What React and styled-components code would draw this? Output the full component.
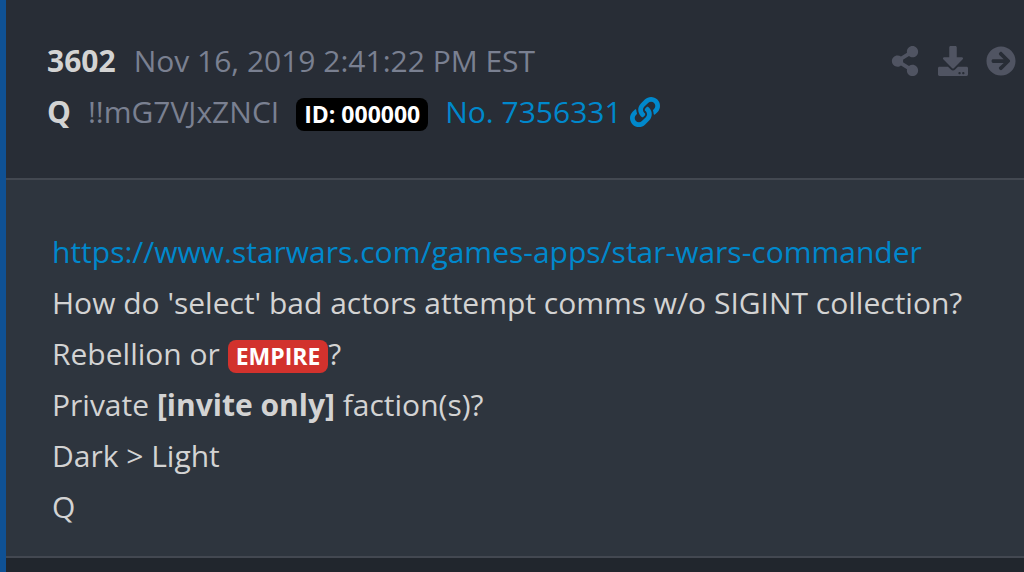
import React from 'react';
import styled, { createGlobalStyle } from 'styled-components';
import { FaArrowCircleRight, FaDownload, FaLink, FaShareAlt } from 'react-icons/fa';

const colors = {
  page: '#21262d',
  header: '#282d36',
  body: '#2e353e',
  border: '#434851',
  accent: '#0f5194',
  text: '#d3d3d3',
  muted: '#7a8091',
  icon: '#505462',
  link: '#0088cc',
  danger: '#d2322d',
};

const GlobalStyle = createGlobalStyle`
  * {
    box-sizing: border-box;
  }
  body {
    margin: 0;
    background: ${colors.page};
    color: ${colors.text};
    font-family: 'Open Sans', sans-serif;
    font-size: 30px;
    line-height: 51px;
  }
`;

const StyledPost = styled.article`
  min-height: 100vh;
  border-left: 6px solid ${colors.accent};
`;

const StyledHeader = styled.header`
  display: flex;
  justify-content: space-between;
  align-items: flex-start;
  padding: 35px 8px 41px 41px;
  background: ${colors.header};
  border-bottom: 2px solid ${colors.border};
`;

const StyledMetaRow = styled.div`
  display: flex;
  align-items: baseline;
  gap: ${({ $gap }) => $gap}px;
`;

const StyledMuted = styled.span`
  color: ${colors.muted};
`;

const StyledLabel = styled.span`
  display: inline-block;
  padding: 0 8px;
  border-radius: 8px;
  background: ${({ $bg }) => $bg};
  color: #fff;
  font-size: 23px;
  font-weight: 700;
  line-height: 33px;
`;

const StyledLink = styled.a`
  color: ${colors.link};
  text-decoration: none;
`;

const StyledPostLink = styled(StyledLink)`
  display: flex;
  align-items: center;
  gap: 8px;
`;

const StyledActions = styled.nav`
  display: flex;
  align-items: center;
  gap: 18px;
  height: 51px;
`;

const StyledAction = styled.button`
  display: flex;
  padding: 0;
  border: 0;
  background: none;
  color: ${colors.icon};
  font-size: 30px;
  cursor: pointer;
`;

const StyledBody = styled.div`
  padding: 46px 46px 24px;
  background: ${colors.body};
  border-bottom: 2px solid ${colors.border};
`;

const StyledLine = styled.p`
  margin: 0;
`;

const actions = [
  { name: 'Share', Icon: FaShareAlt },
  { name: 'Download', Icon: FaDownload },
  { name: 'Go to post', Icon: FaArrowCircleRight },
];

const App = () => (
  <>
    <GlobalStyle />
    <StyledPost>
      <StyledHeader>
        <div>
          <StyledMetaRow $gap={18}>
            <strong>3602</strong>
            <StyledMuted as="time" dateTime="2019-11-16T14:41:22-05:00">
              Nov 16, 2019 2:41:22 PM EST
            </StyledMuted>
          </StyledMetaRow>
          <StyledMetaRow $gap={17}>
            <strong>Q</strong>
            <StyledMuted>!!mG7VJxZNCI</StyledMuted>
            <StyledLabel $bg="#000">ID: 000000</StyledLabel>
            <StyledPostLink href="#7356331">
              No. 7356331
              <FaLink />
            </StyledPostLink>
          </StyledMetaRow>
        </div>
        <StyledActions>
          {actions.map(({ name, Icon }) => (
            <StyledAction key={name} type="button" aria-label={name}>
              <Icon />
            </StyledAction>
          ))}
        </StyledActions>
      </StyledHeader>
      <StyledBody>
        <StyledLine>
          <StyledLink href="https://www.starwars.com/games-apps/star-wars-commander">
            https://www.starwars.com/games-apps/star-wars-commander
          </StyledLink>
        </StyledLine>
        <StyledLine>How do 'select' bad actors attempt comms w/o SIGINT collection?</StyledLine>
        <StyledLine>
          Rebellion or <StyledLabel $bg={colors.danger}>EMPIRE</StyledLabel>?
        </StyledLine>
        <StyledLine>
          Private <strong>[invite only]</strong> faction(s)?
        </StyledLine>
        <StyledLine>Dark &gt; Light</StyledLine>
        <StyledLine>Q</StyledLine>
      </StyledBody>
    </StyledPost>
  </>
);

export default App;
